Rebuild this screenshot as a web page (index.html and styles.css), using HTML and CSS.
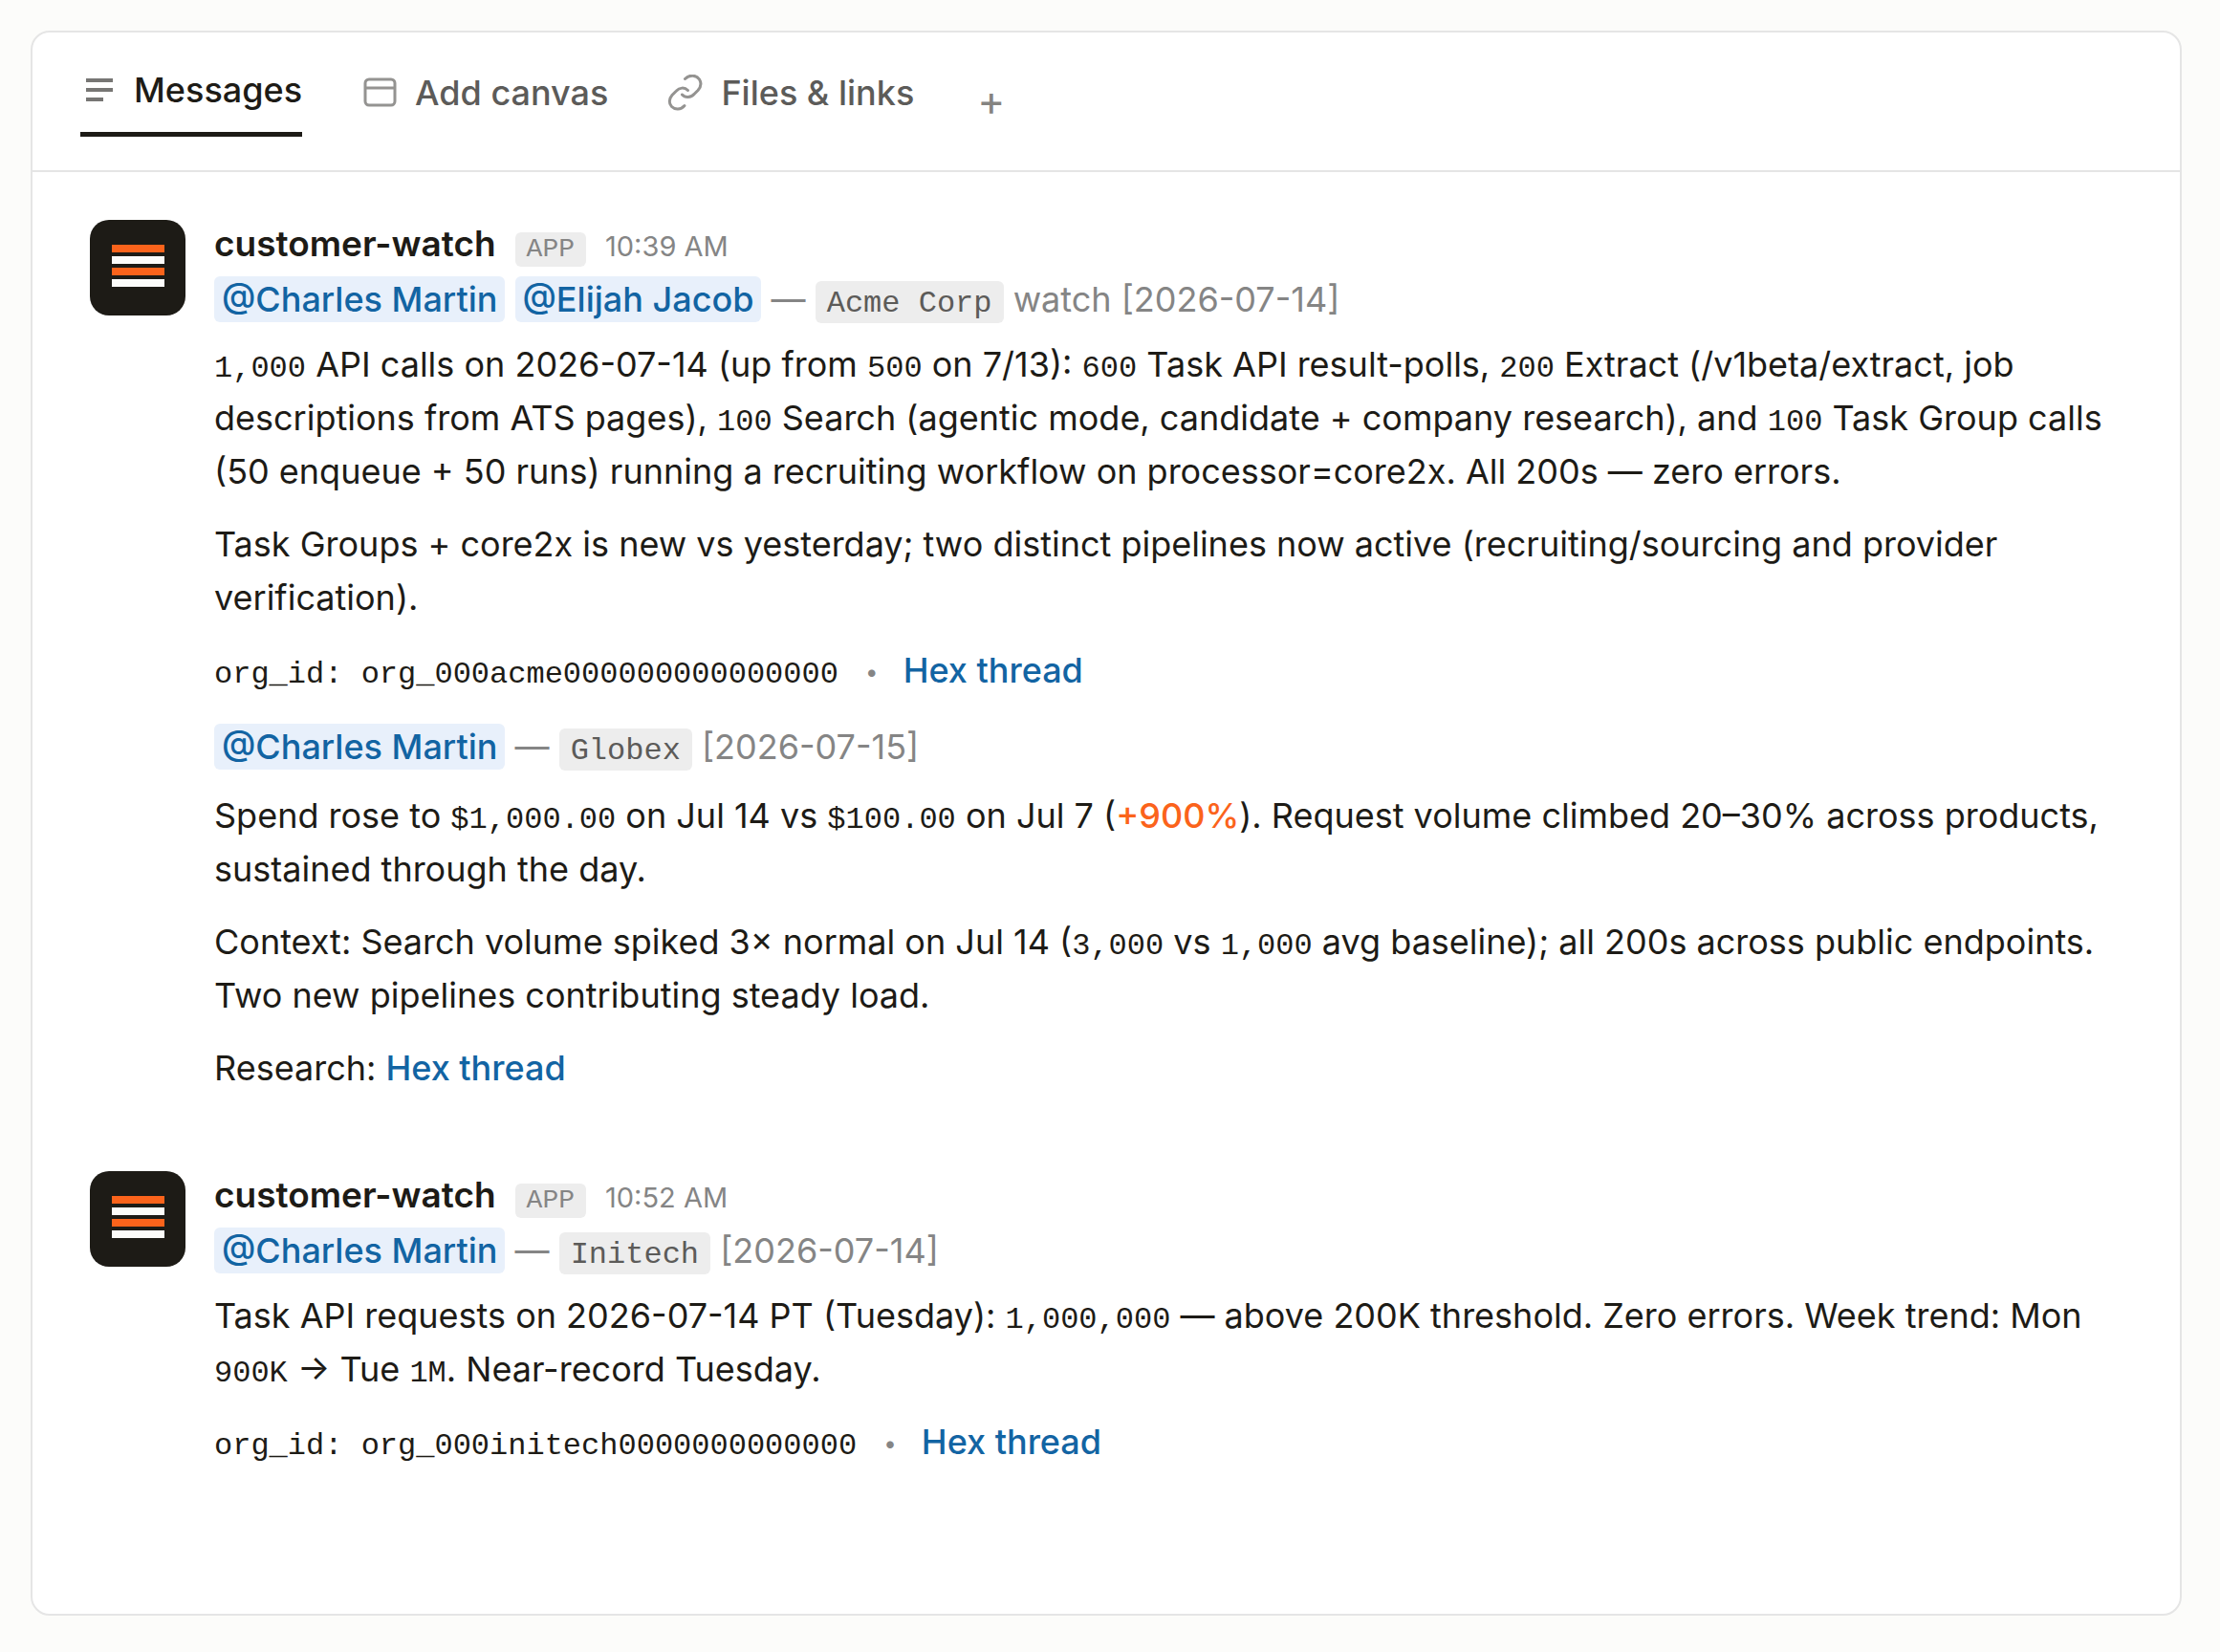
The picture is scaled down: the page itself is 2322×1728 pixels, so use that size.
FILE: index.html
```html
<!DOCTYPE html>
<html lang="en">
<head>
    <meta charset="UTF-8">
    <meta name="viewport" content="width=device-width, initial-scale=1.0">
    <title>customer-watch</title>
    <link rel="stylesheet" href="styles.css">
</head>
<body>

    <main class="card">
        <nav class="tabs">
            <button class="tab active" type="button">
                <svg class="icon" width="38" height="38" viewBox="0 0 38 38" fill="none" stroke="#777674" stroke-width="4">
                    <path d="M6 9h28M6 19h28M6 29h18"/>
                </svg>
                Messages
            </button>
            <button class="tab" type="button">
                <svg class="icon" width="38" height="38" viewBox="0 0 38 38" fill="none" stroke="#949391" stroke-width="3">
                    <rect x="4" y="5" width="31" height="27" rx="4"/>
                    <path d="M4 14h31"/>
                </svg>
                Add canvas
            </button>
            <button class="tab" type="button">
                <svg class="icon" width="38" height="38" viewBox="0 0 38 38" fill="none" stroke="#949391" stroke-width="3" stroke-linecap="round">
                    <path d="M18.500 4.500 C23.500 -.500 30.500 .500 33.500 5 C36 9 35 13 32 16.500 L28.500 20 C24.500 24.500 18.500 24.500 15.500 21"/>
                    <path d="M21.500 16.500 C18 13 12.500 13.500 9.500 17 L5 21.500 C1.500 25.500 1.500 30.500 4.500 33.500 C8 37 14 37 18 32.500"/>
                </svg>
                Files &amp; links
            </button>
            <button class="add-tab" type="button" aria-label="Add tab">+</button>
        </nav>

        <section class="messages">
            <article class="message">
                <svg class="avatar" width="100" height="100" viewBox="0 0 100 100">
                    <rect width="100" height="100" rx="20" fill="#1d1b16"/>
                    <path d="M23 26h55v8H23zM23 50h55v8H23z" fill="#fb631b"/>
                    <path d="M23 38h55v8H23zM23 62h55v8H23z" fill="#fcfcfa"/>
                </svg>
                <div class="content">
                    <div class="meta">
                        <span class="name">customer-watch</span>
                        <span class="badge">APP</span>
                        <time class="time">10:39 AM</time>
                    </div>
                    <p class="subject">
                        <a class="mention" href="#">@Charles Martin</a>
                        <a class="mention" href="#">@Elijah Jacob</a>
                        — <code class="chip">Acme Corp</code> watch [2026-07-14]
                    </p>
                    <p><code>1,000</code> API calls on 2026-07-14 (up from <code>500</code> on 7/13): <code>600</code> Task API result-polls, <code>200</code> Extract (/v1beta/extract, job descriptions from ATS pages), <code>100</code> Search (agentic mode, candidate + company research), and <code>100</code> Task Group calls (50 enqueue + 50 runs) running a recruiting workflow on processor=core2x. All 200s — zero errors.</p>
                    <p>Task Groups + core2x is new vs yesterday; two distinct pipelines now active (recruiting/sourcing and provider verification).</p>
                    <p><code>org_id: org_000acme000000000000000</code> <span class="dot">•</span> <a href="#">Hex thread</a></p>
                    <p class="subject">
                        <a class="mention" href="#">@Charles Martin</a>
                        — <code class="chip">Globex</code> [2026-07-15]
                    </p>
                    <p>Spend rose to <code>$1,000.00</code> on Jul 14 vs <code>$100.00</code> on Jul 7 (<span class="up">+900%</span>). Request volume climbed 20–30% across products, sustained through the day.</p>
                    <p>Context: Search volume spiked 3× normal on Jul 14 (<code>3,000</code> vs <code>1,000</code> avg baseline); all 200s across public endpoints. Two new pipelines contributing steady load.</p>
                    <p>Research: <a href="#">Hex thread</a></p>
                </div>
            </article>

            <article class="message">
                <svg class="avatar" width="100" height="100" viewBox="0 0 100 100">
                    <rect width="100" height="100" rx="20" fill="#1d1b16"/>
                    <path d="M23 26h55v8H23zM23 50h55v8H23z" fill="#fb631b"/>
                    <path d="M23 38h55v8H23zM23 62h55v8H23z" fill="#fcfcfa"/>
                </svg>
                <div class="content">
                    <div class="meta">
                        <span class="name">customer-watch</span>
                        <span class="badge">APP</span>
                        <time class="time">10:52 AM</time>
                    </div>
                    <p class="subject">
                        <a class="mention" href="#">@Charles Martin</a>
                        — <code class="chip">Initech</code> [2026-07-14]
                    </p>
                    <p>Task API requests on 2026-07-14 PT (Tuesday): <code>1,000,000</code> — above 200K threshold. Zero errors. Week trend: Mon <code>900K</code> → Tue <code>1M</code>. Near-record Tuesday.</p>
                    <p><code>org_id: org_000initech0000000000000</code> <span class="dot">•</span> <a href="#">Hex thread</a></p>
                </div>
            </article>
        </section>
    </main>

</body>
</html>
```

FILE: styles.css
```css
* {
    box-sizing: border-box;
}
body {
    display: flex;
    min-height: 100vh;
    margin: 0;
    padding: 32px 40px 38px 32px;
    background: #fcfcfa;
    color: #1d1b16;
    font-family: Inter, "Liberation Sans", sans-serif;
    font-size: 36px;
    line-height: 56px;
}
.card {
    flex: 1;
    background: white;
    border: 2px solid #e5e5e5;
    border-radius: 20px;
}
.tabs {
    display: flex;
    align-items: center;
    gap: 62px;
    padding: 32px 50px 35px;
    border-bottom: 2px solid #e5e5e5;
}
.tab, .add-tab {
    padding: 0;
    border: none;
    background: none;
    color: #5c5b59;
    font: inherit;
    cursor: pointer;
}
.tab {
    display: flex;
    align-items: center;
    gap: 18px;
    padding-bottom: 16px;
    font-weight: 500;
}
.tab.active {
    border-bottom: 5px solid #1d1b16;
    color: #1d1b16;
}
.icon {
    flex: none;
}
.add-tab {
    margin-left: 4px;
    color: #858481;
    font-size: 44px;
}
.messages {
    display: flex;
    flex-direction: column;
    gap: 80px;
    padding: 50px 60px;
}
.message {
    display: flex;
    align-items: flex-start;
    gap: 30px;
}
.avatar {
    flex: none;
}
.content {
    flex: 1;
    min-width: 0;
}
.meta {
    display: flex;
    align-items: baseline;
    gap: 20px;
    margin-bottom: 2px;
    line-height: 50px;
}
.name {
    font-size: 37px;
    font-weight: 600;
}
.badge {
    padding: 0 12px;
    border-radius: 6px;
    background: #ededed;
    color: #858585;
    font-family: "Liberation Mono", monospace;
    font-size: 28px;
    line-height: 36px;
}
.time {
    color: #858585;
    font-size: 29px;
}
p {
    margin: 0 0 20px;
}
p:last-child {
    margin-bottom: 0;
}
.subject {
    margin: 24px 0 16px;
    color: #858585;
}
.meta + .subject {
    margin: 0 0 12px;
}
code {
    font-family: "Liberation Mono", monospace;
    font-size: 32px;
    line-height: 36px;
}
.chip {
    padding: 5px 12px 2px;
    border-radius: 6px;
    background: #ededed;
    color: #5c5b59;
}
a {
    color: #1264a3;
    font-weight: 500;
    text-decoration: none;
}
.mention {
    padding: 2px 8px;
    border-radius: 6px;
    background: #e8f0fb;
}
.dot {
    margin: 0 16px 0 18px;
    color: #858585;
    font-size: 24px;
    vertical-align: 3px;
    line-height: 36px;
}
.up {
    color: #fb631b;
    font-weight: 500;
}
```
